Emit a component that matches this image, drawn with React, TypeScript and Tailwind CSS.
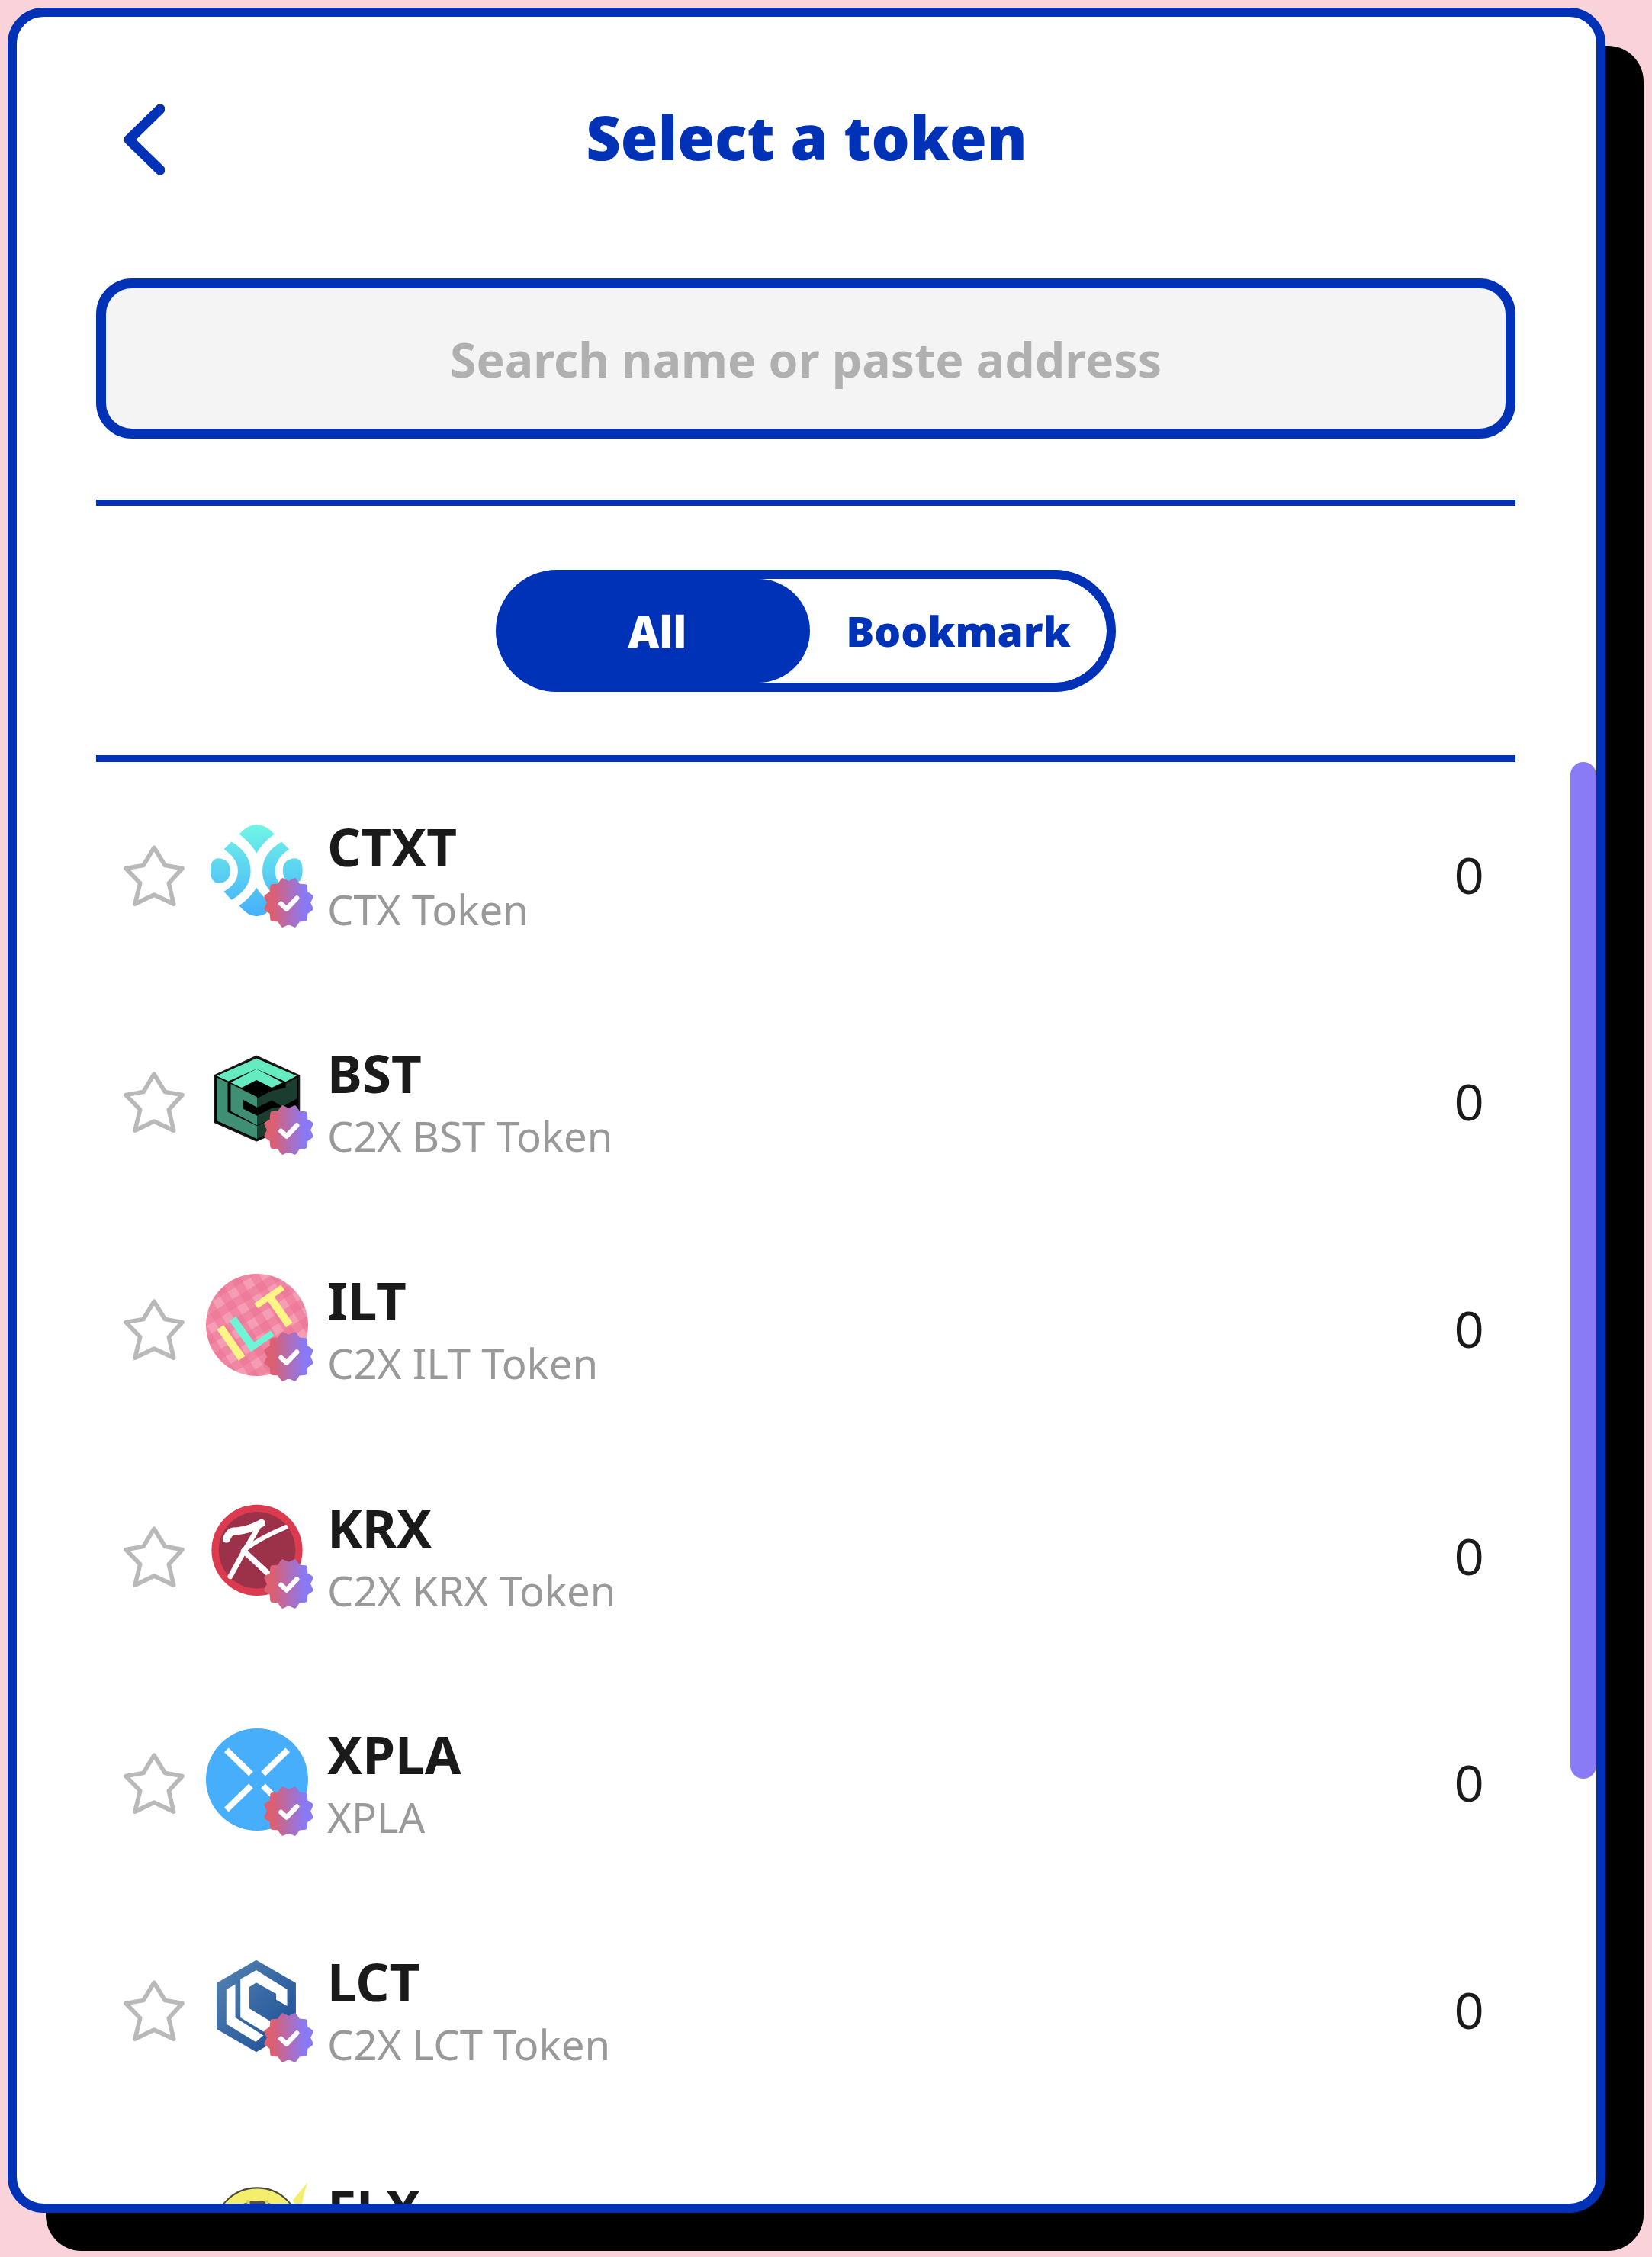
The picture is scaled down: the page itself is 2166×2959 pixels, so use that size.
const BLUE = "#0032b8"

const tokens = [
  { symbol: "CTXT", name: "CTX Token", logo: "ctxt" },
  { symbol: "BST", name: "C2X BST Token", logo: "bst" },
  { symbol: "ILT", name: "C2X ILT Token", logo: "ilt" },
  { symbol: "KRX", name: "C2X KRX Token", logo: "krx" },
  { symbol: "XPLA", name: "XPLA", logo: "xpla" },
  { symbol: "LCT", name: "C2X LCT Token", logo: "lct" },
  { symbol: "FLX", name: "C2X FLX Token", logo: "flx" },
]

function StarIcon() {
  return (
    <svg width="81" height="82" viewBox="65 170 243 245" className="shrink-0">
      <polygon
        points="185,182 228,252 296,264 243,322 262,404 185,368 110,404 130,322 74,264 143,252"
        fill="none"
        stroke="#b9b9b9"
        strokeWidth="17"
        strokeLinejoin="round"
      />
    </svg>
  )
}

// 12 point scalloped seal
const sealPoints = Array.from({ length: 24 }, (_, i) => {
  const r = i % 2 === 0 ? 92 : 78
  const a = (Math.PI * 2 * i) / 24 + Math.PI / 12
  return `${100 + r * Math.cos(a)},${100 + r * Math.sin(a)}`
}).join(" ")

function Badge() {
  return (
    <svg width="67" height="67" viewBox="0 0 200 200" className="absolute -right-[8px] -bottom-[8px]">
      <defs>
        <linearGradient id="seal" x1="0" x2="1" y1="0" y2="0">
          <stop offset="0.15" stopColor="#dc5f72" />
          <stop offset="0.85" stopColor="#8879f5" />
        </linearGradient>
      </defs>
      <polygon points={sealPoints} fill="url(#seal)" stroke="url(#seal)" strokeWidth="14" strokeLinejoin="round" />
      <polyline
        points="70,104 92,124 132,82"
        fill="none"
        stroke="#fff"
        strokeWidth="19"
        strokeLinecap="round"
        strokeLinejoin="round"
      />
    </svg>
  )
}

function Logo({ kind }: { kind: string }) {
  if (kind === "ctxt") {
    return (
      <svg viewBox="0 0 400 400" className="h-full w-full">
        <defs>
          <linearGradient id="ctxt" gradientUnits="userSpaceOnUse" x1="0" x2="0" y1="18" y2="383">
            <stop offset="0" stopColor="#70f5e6" />
            <stop offset="1" stopColor="#45aefc" />
          </linearGradient>
        </defs>
        <g fill="url(#ctxt)">
          <path d="M130 55 Q198 -19 268 55 Q222 88 198 130 Q174 88 130 55Z" />
          <path d="M130 335 Q198 419 268 335 Q222 305 198 265 Q174 305 130 335Z" />
          <path d="M18 198 Q18 150 50 150 Q95 155 95 198 Q95 245 50 247 Q18 247 18 198Z" />
          <path d="M70 115 L100 85 Q175 130 175 200 Q175 270 100 313 L70 280 Q125 250 125 200 Q125 150 70 115Z" />
          <g transform="matrix(-1 0 0 1 396 0)">
            <path d="M18 198 Q18 150 50 150 Q95 155 95 198 Q95 245 50 247 Q18 247 18 198Z" />
            <path d="M70 115 L100 85 Q175 130 175 200 Q175 270 100 313 L70 280 Q125 250 125 200 Q125 150 70 115Z" />
          </g>
        </g>
      </svg>
    )
  }
  if (kind === "bst") {
    return (
      <svg viewBox="0 0 400 400" className="h-full w-full">
        <polygon points="198,35 365,111 365,293 198,366 33,293 33,111" fill="#000" stroke="#1a1a1a" strokeWidth="6" strokeLinejoin="round" />
        <polygon points="198,43 355,112 312,135 198,85 88,133 42,112" fill="#64ecc0" />
        <polygon points="42,118 85,138 85,253 200,308 200,358 42,287" fill="#3f8f75" />
        <polygon points="97,143 200,195 200,235 145,205 145,240 200,268 200,305 97,250" fill="#3f8f75" />
        <polygon points="97,138 198,85 300,138 258,158 198,128 140,158" fill="#64ecc0" />
        <polygon points="358,118 312,142 312,158 258,170 200,200 200,236 258,208 300,232 358,200" fill="#1a3d30" />
        <polygon points="200,308 258,280 358,240 358,288 200,358" fill="#1a3d30" />
        <polygon points="200,268 258,238 300,232 300,262 200,305" fill="#1a3d30" />
      </svg>
    )
  }
  if (kind === "ilt") {
    return (
      <svg viewBox="0 0 400 400" className="h-full w-full">
        <defs>
          <pattern id="plaid" width="70" height="70" patternUnits="userSpaceOnUse" patternTransform="rotate(-32)">
            <rect width="70" height="70" fill="#f59db4" />
            <rect width="35" height="70" fill="#ec6f90" opacity="0.5" />
            <rect width="70" height="35" fill="#ec6f90" opacity="0.5" />
          </pattern>
        </defs>
        <circle cx="200" cy="200" r="200" fill="url(#plaid)" />
        <text
          x="205"
          y="272"
          textAnchor="middle"
          transform="rotate(-35 200 195)"
          fontSize="215"
          fontWeight="700"
          fontFamily="'Liberation Sans', sans-serif"
        >
          <tspan fill="#fdf585">I</tspan>
          <tspan fill="#6ef5d6">L</tspan>
          <tspan fill="#fdf585">T</tspan>
        </text>
      </svg>
    )
  }
  if (kind === "krx") {
    return (
      <svg viewBox="0 0 400 400" className="h-full w-full">
        <circle cx="200" cy="192" r="178" fill="#dc3a4e" />
        <circle cx="200" cy="192" r="150" fill="#9b3249" />
        <g fill="none" stroke="#fff" strokeLinecap="round" strokeLinejoin="round">
          <path d="M215 82 Q190 130 150 195 L95 295" strokeWidth="20" />
          <path d="M80 148 Q95 112 120 118 Q170 112 218 86" strokeWidth="30" />
          <path d="M150 190 Q220 140 312 102" strokeWidth="18" />
          <path d="M148 195 L245 285" strokeWidth="22" />
        </g>
      </svg>
    )
  }
  if (kind === "xpla") {
    return (
      <svg viewBox="0 0 400 400" className="h-full w-full">
        <circle cx="200" cy="200" r="200" fill="#47aefc" />
        <g stroke="#fff" strokeWidth="24">
          <line x1="80" y1="85" x2="176" y2="178" />
          <line x1="320" y1="85" x2="224" y2="178" />
          <line x1="80" y1="318" x2="176" y2="225" />
          <line x1="320" y1="318" x2="224" y2="225" />
        </g>
      </svg>
    )
  }
  if (kind === "lct") {
    return (
      <svg viewBox="0 0 400 400" className="h-full w-full">
        <defs>
          <linearGradient id="lct" x1="0" x2="1" y1="0" y2="1">
            <stop offset="0.1" stopColor="#4f7fae" />
            <stop offset="0.9" stopColor="#1f5099" />
          </linearGradient>
        </defs>
        <polygon points="197,20 352,110 352,290 197,380 42,290 42,110" fill="url(#lct)" />
        <polygon points="80,135 115,115 115,245 225,315 195,340 80,270" fill="#fff" />
        <polygon points="197,60 318,135 318,200 275,175 275,152 197,108 170,125 170,210 250,258 270,280 225,300 135,245 135,95" fill="#fff" />
      </svg>
    )
  }
  return (
    <svg viewBox="0 0 400 400" className="h-full w-full">
      <path d="M340 70 Q365 40 398 0 Q375 60 372 130Z" fill="#f4ee6c" />
      <circle cx="200" cy="190" r="170" fill="#f4ee6c" />
      <circle cx="200" cy="190" r="168" fill="none" stroke="#4a4a3c" strokeWidth="6" />
      <circle cx="200" cy="200" r="128" fill="#5c5140" />
      <path d="M165 70 L175 190 M240 70 L225 190" stroke="#d8cf6a" strokeWidth="12" />
    </svg>
  )
}

function TokenRow({ symbol, name, logo }: { symbol: string; name: string; logo: string }) {
  return (
    <div className="flex h-[297.6px] shrink-0 items-center pl-[140px] pr-[148px]">
      <StarIcon />
      <div className="relative mb-[11px] ml-[27px] h-[134px] w-[134px] shrink-0">
        <Logo kind={logo} />
        <Badge />
      </div>
      <div className="ml-[25px] flex flex-col gap-[14px]">
        <span className="text-[69px] leading-[74px] font-bold text-[#1a1a1a]">{symbol}</span>
        <span className="text-[54.5px] leading-[64px] text-[#999999]">{name}</span>
      </div>
      <span className="ml-auto font-['Liberation_Sans',sans-serif] text-[68px] text-[#1a1a1a]">0</span>
    </div>
  )
}

export default function App() {
  return (
    <main className="h-[2959px] bg-[#f9d3d9] pt-[10px] pl-[10px] font-['Noto_Sans',sans-serif]">
      <div className="flex h-[2891px] w-[2095px] flex-col overflow-hidden rounded-[47px] border-[12px] border-[#0032b8] bg-white shadow-[50px_50px_0_#000]">
        <header className="grid h-[316px] shrink-0 grid-cols-[1fr_auto_1fr] items-center px-[141px]">
          <svg width="53" height="92" viewBox="0 0 53 92" className="mt-[6px]">
            <polyline points="47,6 6,46 47,86" fill="none" stroke={BLUE} strokeWidth="13" strokeLinecap="round" strokeLinejoin="round" />
          </svg>
          <h1 className="text-[79px] font-black text-[#0032b8]">Select a token</h1>
          <div />
        </header>

        <div className="mt-[27px] flex flex-col pr-[106px] pl-[104px]">
          <input
            placeholder="Search name or paste address"
            className="h-[210px] w-full rounded-[47px] border-[13px] border-[#0032b8] bg-[#f4f4f4] text-center text-[62.5px] font-bold outline-none placeholder:text-[#b0b0b0]"
          />
          <div className="mt-[80px] h-[8px] bg-[#0032b8]" />
          <div className="mx-auto mt-[84px] flex h-[160px] w-[813px] overflow-hidden rounded-full border-[12px] border-[#0032b8] bg-[#0032b8]">
            <div className="z-10 flex w-[400px] shrink-0 items-center justify-center rounded-r-full bg-[#0032b8] text-[56px] font-black text-white">
              All
            </div>
            <div className="-ml-[68px] flex flex-1 items-center justify-center rounded-r-full bg-white pl-[68px] text-[55px] font-black text-[#0032b8]">
              Bookmark
            </div>
          </div>
          <div className="mt-[83px] h-[9px] bg-[#0032b8]" />
        </div>

        <div className="relative flex min-h-0 flex-1 flex-col overflow-hidden">
          {tokens.map((t) => (
            <TokenRow key={t.symbol} {...t} />
          ))}
          <div className="absolute top-0 right-0 h-[1333px] w-[34px] rounded-full bg-[#887bf5]" />
        </div>
      </div>
    </main>
  )
}
